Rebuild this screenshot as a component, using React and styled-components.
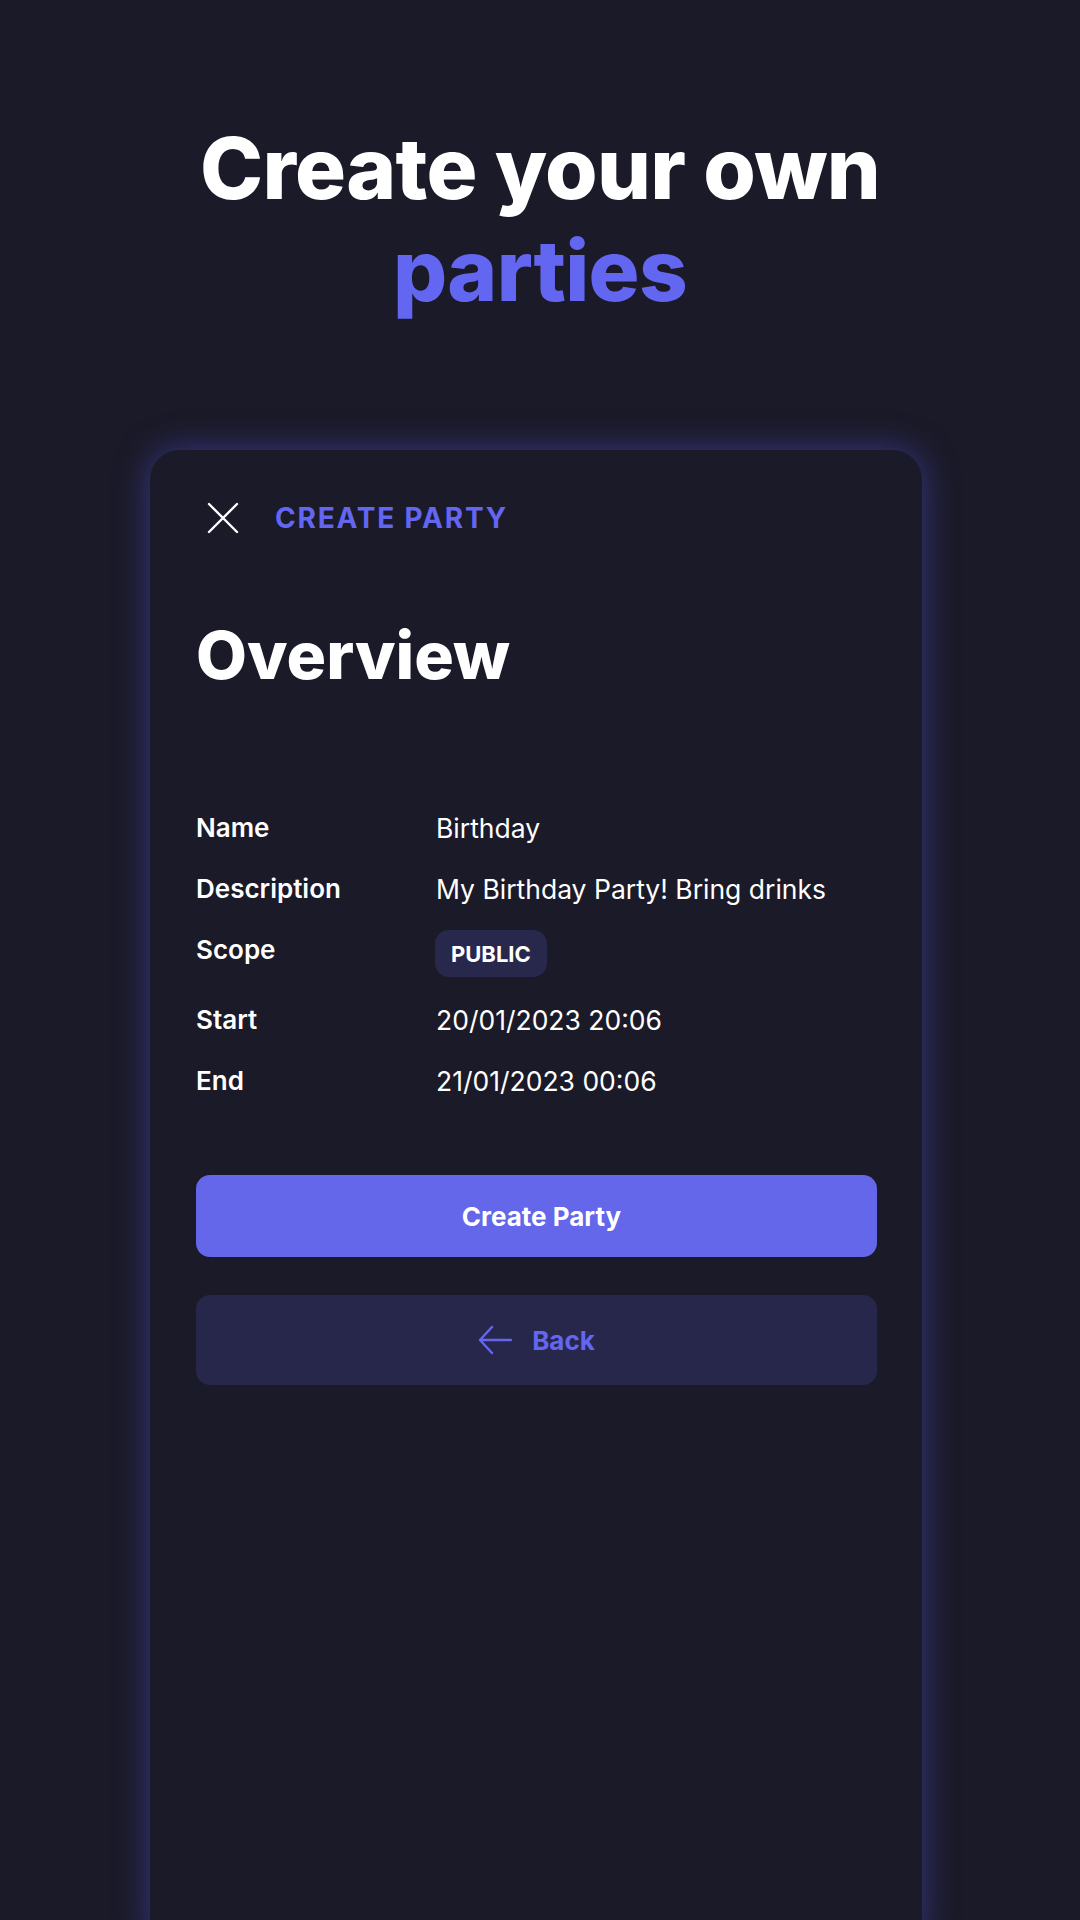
import React from 'react';
import styled, { createGlobalStyle } from 'styled-components';

const GlobalStyle = createGlobalStyle`
    html, body {
        margin: 0;
        padding: 0;
        background: #1b1a28;
    }
    body {
        font-family: Inter, "Noto Sans", sans-serif;
        color: #ffffff;
    }
`;

const details = [
    { label: 'Name', value: 'Birthday' },
    { label: 'Description', value: 'My Birthday Party! Bring drinks' },
    { label: 'Scope', badge: 'PUBLIC' },
    { label: 'Start', value: '20/01/2023 20:06' },
    { label: 'End', value: '21/01/2023 00:06' },
];

function CloseIcon() {
    return (
        <svg width="32" height="32" viewBox="0 0 32 32" fill="none">
            <path d="M2 2L30 30M30 2L2 30" stroke="#ffffff" strokeWidth="2.4" strokeLinecap="round" />
        </svg>
    );
}

function ArrowLeftIcon() {
    return (
        <svg width="34" height="30" viewBox="0 0 34 30" fill="none">
            <path d="M33 15H2M14 2L2 15L14 28" stroke="#6366f1" strokeWidth="2.4" strokeLinecap="round" strokeLinejoin="round" />
        </svg>
    );
}

function App() {
    return (
        <Page>
            <GlobalStyle />
            <Headline>
                Create your own
                <br />
                <Accent>parties</Accent>
            </Headline>
            <Card>
                <Header>
                    <CloseButton aria-label="Close">
                        <CloseIcon />
                    </CloseButton>
                    <HeaderTitle>CREATE PARTY</HeaderTitle>
                </Header>
                <Heading>Overview</Heading>
                <DetailList>
                    {details.map((d) => (
                        <DetailRow key={d.label}>
                            <Label>{d.label}</Label>
                            {d.badge ? <Badge>{d.badge}</Badge> : <Value>{d.value}</Value>}
                        </DetailRow>
                    ))}
                </DetailList>
                <PrimaryButton>Create Party</PrimaryButton>
                <SecondaryButton>
                    <ArrowLeftIcon />
                    Back
                </SecondaryButton>
            </Card>
        </Page>
    );
}

const Page = styled.main`
    height: 1920px;
    overflow: hidden;
    display: flex;
    flex-direction: column;
    align-items: center;
    padding-top: 118px;
    box-sizing: border-box;
`;

const Headline = styled.h1`
    margin: 0;
    font-size: 85px;
    line-height: 102px;
    font-weight: 800;
    text-align: center;
    letter-spacing: -0.7px;
    color: #ffffff;
`;

const Accent = styled.span`
    color: #6366f1;
`;

const Card = styled.section`
    margin-top: 128px;
    margin-right: 8px;
    width: 772px;
    min-height: 1500px;
    box-sizing: border-box;
    padding: 52px 45px 0 46px;
    background: #1b1a28;
    border-radius: 30px;
    box-shadow: 0 0 32px 2px rgba(72, 72, 190, 0.55);
    display: flex;
    flex-direction: column;
`;

const Header = styled.div`
    display: flex;
    align-items: center;
    height: 32px;
    padding-left: 11px;
    gap: 36px;
`;

const CloseButton = styled.button`
    display: flex;
    padding: 0;
    border: 0;
    background: none;
    cursor: pointer;
`;

const HeaderTitle = styled.span`
    font-size: 28px;
    font-weight: 700;
    letter-spacing: 1.8px;
    color: #6366f1;
`;

const Heading = styled.h2`
    margin: 82px 0 0;
    font-size: 66px;
    line-height: 79px;
    font-weight: 800;
    letter-spacing: 0;
    color: #ffffff;
`;

const DetailList = styled.dl`
    margin: 115px 0 0;
    display: flex;
    flex-direction: column;
    gap: 25px;
`;

const DetailRow = styled.div`
    display: flex;
    align-items: flex-start;
`;

const Label = styled.dt`
    width: 240px;
    flex-shrink: 0;
    font-size: 26px;
    line-height: 36px;
    font-weight: 600;
    color: #ffffff;
`;

const Value = styled.dd`
    margin: 0;
    font-size: 26.5px;
    line-height: 36px;
    font-weight: 400;
    color: #ffffff;
`;

const Badge = styled.dd`
    margin: -2px 0 0 -1px;
    height: 47px;
    padding: 0 16px;
    display: flex;
    align-items: center;
    border-radius: 14px;
    background: #28284c;
    font-size: 22px;
    font-weight: 700;
    color: #ffffff;
`;

const BaseButton = styled.button`
    width: 100%;
    display: flex;
    align-items: center;
    justify-content: center;
    border: 0;
    border-radius: 14px;
    font-family: inherit;
    font-size: 26px;
    font-weight: 700;
    cursor: pointer;
`;

const PrimaryButton = styled(BaseButton)`
    margin-top: 76px;
    height: 82px;
    padding-left: 16px;
    background: #6467ea;
    color: #ffffff;
`;

const SecondaryButton = styled(BaseButton)`
    margin-top: 38px;
    height: 90px;
    gap: 20px;
    background: #27274b;
    color: #6366f1;
`;

export default App;
